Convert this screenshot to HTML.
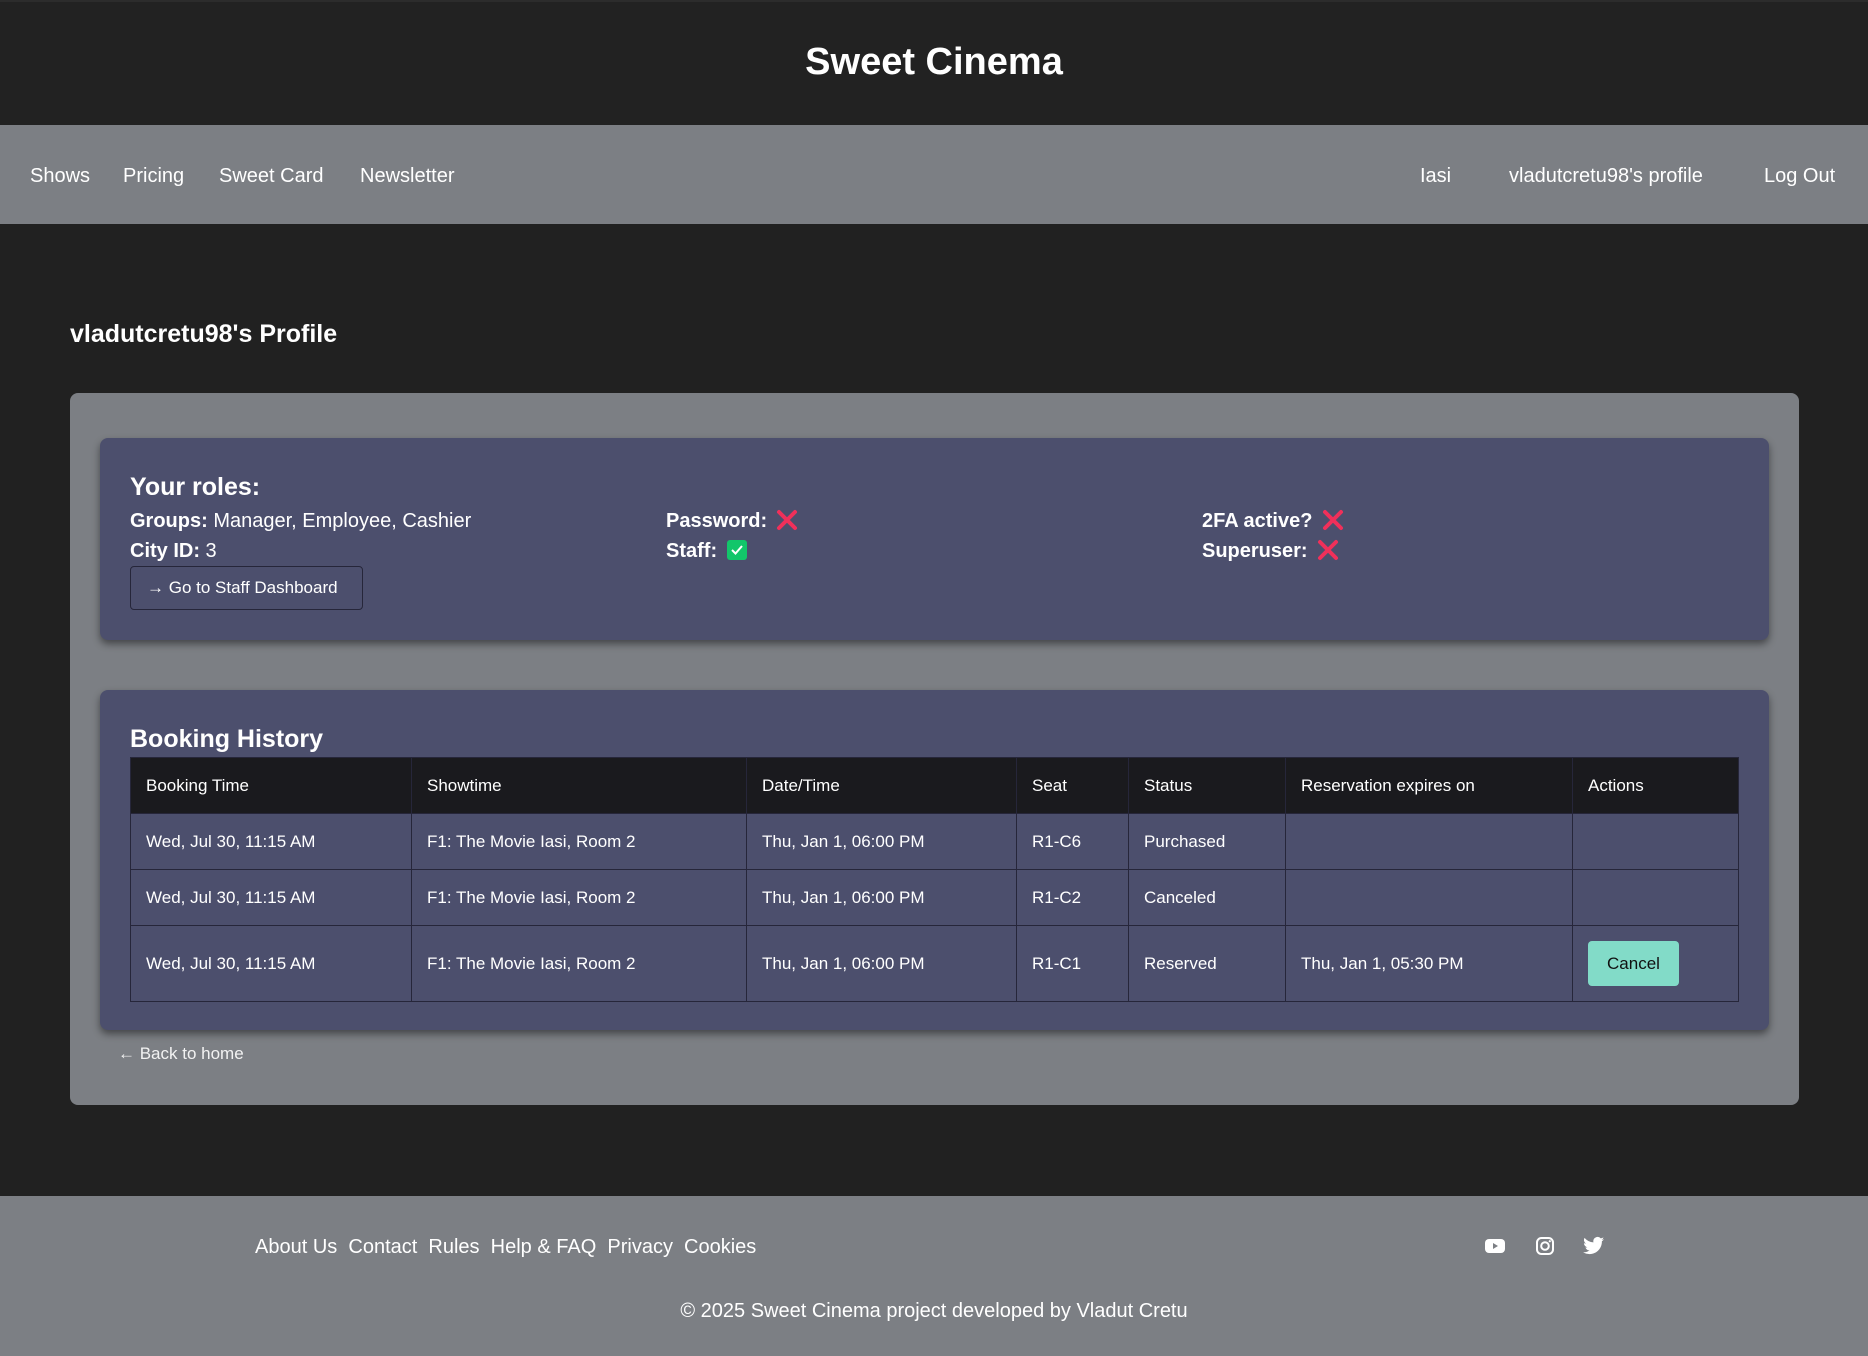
<!DOCTYPE html>
<html><head><meta charset="utf-8"><style>
*{margin:0;padding:0;box-sizing:border-box}
body{width:1868px;height:1356px;background:#212121;font-family:"Liberation Sans",Arial,sans-serif;color:#fff;position:relative;overflow:hidden}
.a{position:absolute;white-space:nowrap}
.hdr{position:absolute;left:0;top:0;width:1868px;height:125px;background:#222;border-top:2px solid #2c2c2c}
.nav{position:absolute;left:0;top:125px;width:1868px;height:99px;background:#7c7f84}
.nav span{position:absolute;top:40px;font-size:20px;color:#fff}
.outer{position:absolute;left:70px;top:393px;width:1729px;height:712px;background:#7c7f84;border-radius:8px}
.card{position:absolute;background:#4c4f6d;border-radius:8px;box-shadow:0 4px 8px rgba(0,0,0,.45)}
.b{font-weight:bold}
table{position:absolute;left:130px;top:757px;width:1609px;border-collapse:collapse;font-size:17px}
td,th{border:1px solid #26263a;padding:0 15px;text-align:left;font-weight:normal}
th{background:#1a1a1e;height:56px}
td{height:56px}
.foot{position:absolute;left:0;top:1196px;width:1868px;height:160px;background:#7c7f84}
</style></head><body>
<div class="hdr"></div>
<div class="a b" style="left:0;width:1868px;text-align:center;top:41px;font-size:38px">Sweet Cinema</div>
<div class="nav">
<span style="left:30px">Shows</span><span style="left:123px">Pricing</span><span style="left:219px">Sweet Card</span><span style="left:360px">Newsletter</span>
<span style="left:1420px">Iasi</span><span style="left:1509px">vladutcretu98's profile</span><span style="left:1764px">Log Out</span>
</div>
<div class="a b" style="left:70px;top:320px;font-size:25px">vladutcretu98's Profile</div>
<div class="outer"></div>
<div class="card" style="left:100px;top:438px;width:1669px;height:202px"></div>
<div class="a b" style="left:130px;top:473px;font-size:25px">Your roles:</div>
<div class="a" style="left:130px;top:510px;font-size:20px"><b>Groups:</b> Manager, Employee, Cashier</div>
<div class="a" style="left:130px;top:540px;font-size:20px"><b>City ID:</b> 3</div>
<div class="a" style="left:130px;top:566px;width:233px;height:44px;border:1px solid #26263a;border-radius:4px;font-size:17px;line-height:42px;padding-left:16px">→ Go to Staff Dashboard</div>
<div class="a" style="left:666px;top:510px;font-size:20px"><b>Password:</b></div>
<svg class="a" style="left:776px;top:509px" width="22" height="22" viewBox="0 0 22 22"><path d="M3 3L19 19M19 3L3 19" stroke="#f0305a" stroke-width="4" stroke-linecap="round"/></svg>
<div class="a" style="left:666px;top:540px;font-size:20px"><b>Staff:</b></div>
<svg class="a" style="left:727px;top:540px" width="20" height="20" viewBox="0 0 20 20"><rect width="20" height="20" rx="3" fill="#12c66a"/><path d="M5 10l3.5 3.5L15 6" stroke="#fff" stroke-width="2" fill="none"/></svg>
<div class="a" style="left:1202px;top:510px;font-size:20px"><b>2FA active?</b></div>
<svg class="a" style="left:1322px;top:509px" width="22" height="22" viewBox="0 0 22 22"><path d="M3 3L19 19M19 3L3 19" stroke="#f0305a" stroke-width="4" stroke-linecap="round"/></svg>
<div class="a" style="left:1202px;top:540px;font-size:20px"><b>Superuser:</b></div>
<svg class="a" style="left:1317px;top:539px" width="22" height="22" viewBox="0 0 22 22"><path d="M3 3L19 19M19 3L3 19" stroke="#f0305a" stroke-width="4" stroke-linecap="round"/></svg>

<div class="card" style="left:100px;top:690px;width:1669px;height:340px"></div>
<div class="a b" style="left:130px;top:725px;font-size:25px">Booking History</div>
<table>
<tr><th style="width:281px">Booking Time</th><th style="width:335px">Showtime</th><th style="width:270px">Date/Time</th><th style="width:112px">Seat</th><th style="width:157px">Status</th><th style="width:287px">Reservation expires on</th><th>Actions</th></tr>
<tr><td>Wed, Jul 30, 11:15 AM</td><td>F1: The Movie Iasi, Room 2</td><td>Thu, Jan 1, 06:00 PM</td><td>R1-C6</td><td>Purchased</td><td></td><td></td></tr>
<tr><td>Wed, Jul 30, 11:15 AM</td><td>F1: The Movie Iasi, Room 2</td><td>Thu, Jan 1, 06:00 PM</td><td>R1-C2</td><td>Canceled</td><td></td><td></td></tr>
<tr><td style="height:76px">Wed, Jul 30, 11:15 AM</td><td>F1: The Movie Iasi, Room 2</td><td>Thu, Jan 1, 06:00 PM</td><td>R1-C1</td><td>Reserved</td><td>Thu, Jan 1, 05:30 PM</td><td><span style="display:inline-block;width:91px;height:45px;background:#82dbc8;color:#111;border-radius:4px;text-align:center;line-height:45px">Cancel</span></td></tr>
</table>
<div class="a" style="left:118px;top:1044px;font-size:17px;color:#f2f2f2">← Back to home</div>

<div class="foot"></div>
<div class="a" style="left:255px;top:1236px;font-size:20px">About Us&nbsp; Contact&nbsp; Rules&nbsp; Help &amp; FAQ&nbsp; Privacy&nbsp; Cookies</div>
<svg class="a" style="left:1484px;top:1237px" width="22" height="18" viewBox="0 0 22 18"><rect x="1" y="2" width="20" height="14" rx="4" fill="#fff"/><path d="M9 6v6l5-3z" fill="#7c7f84"/></svg>
<svg class="a" style="left:1535px;top:1236px" width="20" height="20" viewBox="0 0 20 20"><rect x="2" y="2" width="16" height="16" rx="4.5" stroke="#fff" stroke-width="2" fill="none"/><circle cx="10" cy="10" r="3.8" stroke="#fff" stroke-width="2" fill="none"/><circle cx="14.8" cy="5.2" r="1.1" fill="#fff"/></svg>
<svg class="a" style="left:1583px;top:1236px" width="22" height="20" viewBox="0 0 24 20"><path d="M23 2.5a9 9 0 0 1-2.7.8A4.7 4.7 0 0 0 22.4.6a9.4 9.4 0 0 1-3 1.1A4.7 4.7 0 0 0 11.4 6 13.3 13.3 0 0 1 1.7 1.1a4.7 4.7 0 0 0 1.5 6.3A4.6 4.6 0 0 1 1 6.8a4.7 4.7 0 0 0 3.8 4.6 4.7 4.7 0 0 1-2.1.1 4.7 4.7 0 0 0 4.4 3.3A9.4 9.4 0 0 1 0 16.7 13.3 13.3 0 0 0 7.2 18.8c8.6 0 13.4-7.2 13.4-13.4v-.6A9.6 9.6 0 0 0 23 2.5z" fill="#fff"/></svg>
<div class="a" style="left:0;width:1868px;text-align:center;top:1300px;font-size:20px">© 2025 Sweet Cinema project developed by Vladut Cretu</div>
</body></html>
